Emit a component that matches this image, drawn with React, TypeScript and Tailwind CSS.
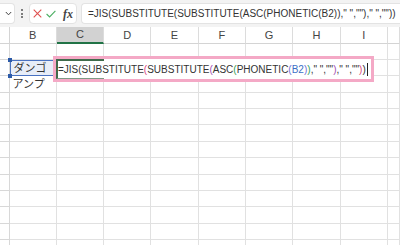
import React from "react";

const cols = ["B", "C", "D", "E", "F", "G", "H", "I", ""];

// paren colours by nesting level, as Excel paints them in edit mode
const P1 = "text-[#d9467e]";
const P2 = "text-[#a24fb3]";
const P3 = "text-[#2f9e57]";
const P4 = "text-[#6d6fd6]";

const EditFormula = () => (
  <span className="whitespace-pre">
    <span>=JIS(SUBSTITUTE</span>
    <span className={P1}>(</span>
    <span>SUBSTITUTE</span>
    <span className={P2}>(</span>
    <span>ASC</span>
    <span className={P3}>(</span>
    <span>PHONETIC</span>
    <span className={P4}>(</span>
    <span className="text-[#3b6fc6]">B2</span>
    <span className={P4}>)</span>
    <span className={P3}>)</span>
    <span>," ",""</span>
    <span className={P2}>)</span>
    <span>," ",""</span>
    <span className={P1}>)</span>
    <span>)</span>
  </span>
);

const App = () => {
  const rows = Array.from({ length: 13 }, (_, i) => i + 1);

  return (
    <div className="relative w-[400px] h-[245px] overflow-hidden bg-white text-[#333] font-['Liberation_Sans','Noto_Sans_CJK_JP',sans-serif]">
      {/* formula bar */}
      <div className="flex items-center h-[27px] bg-[#f3f3f3]">
        <div className="flex items-center justify-end w-[15px] h-[21px] bg-white rounded-r-[4px] border border-l-0 border-[#e3e3e3] pr-[2px]">
          <svg width="7" height="5" viewBox="0 0 7 5">
            <path d="M0.8 1 L3.5 3.8 L6.2 1" fill="none" stroke="#444" strokeWidth="1" />
          </svg>
        </div>
        <div className="ml-[5px] flex flex-col items-center justify-center gap-[1.5px] w-[4px]">
          <span className="w-[2px] h-[2px] rounded-full bg-[#555]" />
          <span className="w-[2px] h-[2px] rounded-full bg-[#555]" />
          <span className="w-[2px] h-[2px] rounded-full bg-[#555]" />
        </div>
        <div className="ml-[5px] flex items-center h-[21px] w-[48px] pl-[3px] bg-white rounded-[4px] border border-[#e3e3e3]">
          <svg width="9" height="9" viewBox="0 0 9 9">
            <path d="M0.7 0.7 L8.3 8.3 M8.3 0.7 L0.7 8.3" stroke="#e0504f" strokeWidth="1.1" />
          </svg>
          <svg className="ml-[4px]" width="10" height="8" viewBox="0 0 10 8">
            <path d="M0.6 4 L3.6 7 L9.4 0.8" fill="none" stroke="#4caf63" strokeWidth="1.1" />
          </svg>
          <span className="ml-[7px] font-['Liberation_Serif',serif] italic font-bold text-[12px] leading-none text-[#444]">fx</span>
        </div>
        <div className="ml-[4px] flex-1 flex items-center h-[21px] pl-[6px] bg-white rounded-l-[4px] border border-r-0 border-[#e3e3e3] text-[10px] text-[#333] whitespace-pre overflow-hidden">
          {'=JIS(SUBSTITUTE(SUBSTITUTE(ASC(PHONETIC(B2))," ",""),"' + " " + '",""))'}
        </div>
      </div>

      {/* sheet */}
      <div className="grid grid-cols-[9.5px_repeat(8,47.3px)_1fr] grid-rows-[16.5px] auto-rows-[16.4px]">
        <div className="border-r border-b border-[#d4d4d4] bg-white" />
        {cols.map((c, i) => (
          <div
            key={"h" + i}
            className={
              "flex items-center justify-center text-[11px] text-[#444] border-r border-[#dcdcdc] " +
              (c === "C" ? "bg-[#d2d2d2] border-b-2 border-b-[#217346]" : "bg-white border-b border-b-[#d4d4d4]")
            }
          >
            {c}
          </div>
        ))}
        {rows.map((r) => (
          <React.Fragment key={r}>
            <div className="border-r border-b border-[#d8d8d8] bg-white" />
            {cols.map((c, i) => {
              if (r === 2 && c === "B") {
                return (
                  <div
                    key={c + r}
                    className="relative flex items-center pl-[3px] text-[11px] bg-[#e7edf8] border-[1.5px] border-[#4a72c2]"
                  >
                    ダンゴ
                    <span className="absolute left-[-3px] top-[-3px] w-[4px] h-[4px] bg-[#2c5aa8]" />
                    <span className="absolute left-[-3px] bottom-[-3px] w-[4px] h-[4px] bg-[#2c5aa8]" />
                  </div>
                );
              }
              return (
                <div
                  key={c + r + i}
                  className="flex items-center pl-[3px] text-[11px] border-r border-b border-[#e1e1e1]"
                >
                  {r === 3 && c === "B" ? "アンプ" : ""}
                </div>
              );
            })}
          </React.Fragment>
        ))}
      </div>

      {/* in-cell editor overlay */}
      <div className="absolute left-[53px] top-[56px] w-[321px] h-[26px] border-[3px] border-[#f4a9c6] bg-white">
        <div className="absolute left-0 top-0 w-[48px] h-[20px] border-t-2 border-l-2 border-[#3f6b4b] border-b border-b-[#7d9c86]" />
        <div className="relative flex items-center h-full pl-[2px] text-[10px] text-[#333]">
          <EditFormula />
          <span className="ml-[1px] w-[1px] h-[13px] bg-[#222]" />
        </div>
      </div>
    </div>
  );
};

export default App;
